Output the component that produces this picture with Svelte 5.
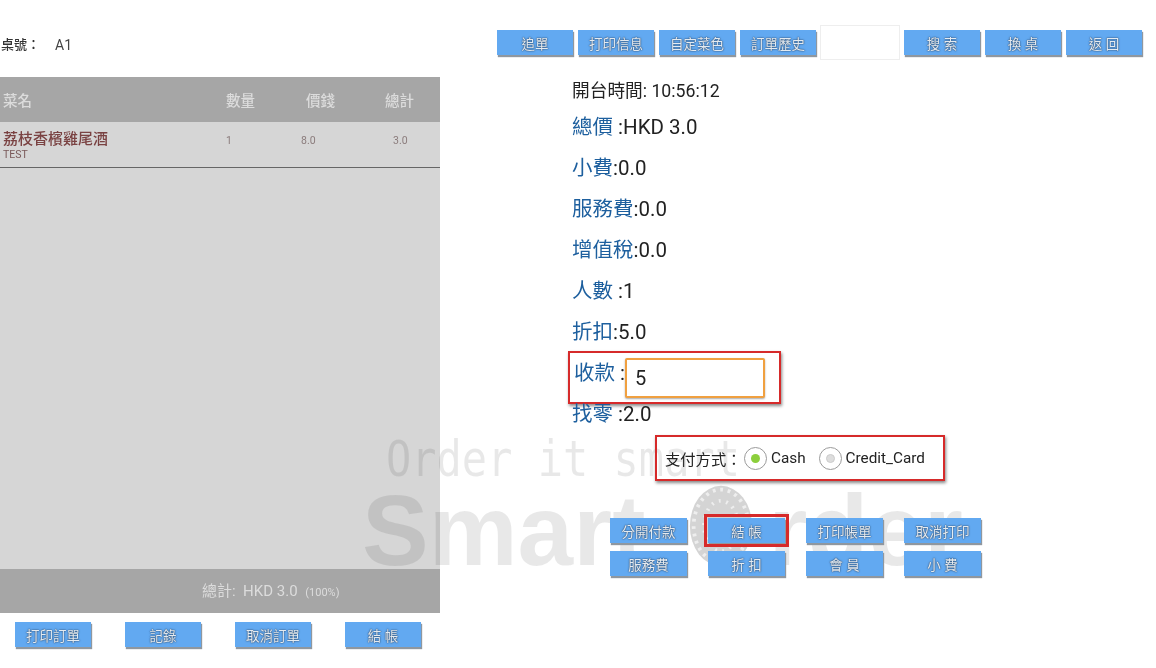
<script>
  const toolbarA = ['追單', '打印信息', '自定菜色', '訂單歷史'];
  const toolbarB = ['搜 索', '換 桌', '返 回'];
  const rows = [['小費', ':0.0'], ['服務費', ':0.0'], ['增值稅', ':0.0'], ['人數', ' :1'], ['折扣', ':5.0']];
  const actions = ['分開付款', '結 帳', '打印帳單', '取消打印', '服務費', '折 扣', '會 員', '小 費'];
  const footerBtns = ['打印訂單', '記錄', '取消訂單', '結 帳'];
</script>

<div class="screen">
  <section class="left">
    <div class="table-no"><span>桌號：</span><span class="a1">A1</span></div>
    <div class="panel">
      <div class="head"><span>菜名</span><span>數量</span><span>價錢</span><span>總計</span></div>
      <div class="item">
        <div class="dish"><div class="dish-name">荔枝香檳雞尾酒</div><div class="dish-sub">TEST</div></div>
        <span>1</span><span>8.0</span><span>3.0</span>
      </div>
      <div class="spacer"></div>
      <div class="total">總計:&nbsp; HKD 3.0 <small>(100%)</small></div>
    </div>
    <div class="left-btns">
      {#each footerBtns as b}<button class="btn">{b}</button>{/each}
    </div>
  </section>

  <div class="watermark" aria-hidden="true">
    <div class="wm-top">Order it smart</div>
    <div class="wm-main">
      <span>Smart</span>
      <svg class="globe" viewBox="0 0 70 90" width="66" height="84" preserveAspectRatio="none">
        <ellipse cx="35" cy="45" rx="33" ry="43" fill="#d4d4d4" />
        <ellipse cx="35" cy="45" rx="29" ry="39" fill="none" stroke="#eee" stroke-width="4" stroke-dasharray="3 5" />
        <ellipse cx="35" cy="45" rx="18" ry="27" fill="none" stroke="#eee" stroke-width="4" stroke-dasharray="2 6" />
      </svg>
      <span>rder</span>
    </div>
  </div>

  <section class="right">
    <div class="toolbar">
      {#each toolbarA as b}<button class="btn wide">{b}</button>{/each}
      <input class="search" aria-label="search" />
      {#each toolbarB as b}<button class="btn wide">{b}</button>{/each}
    </div>

    <div class="info">
      <div class="opened">開台時間: 10:56:12</div>
      <div class="row first"><b>總價</b> :HKD 3.0</div>
      {#each rows as [k, v]}<div class="row"><b>{k}</b>{v}</div>{/each}
      <div class="row boxed"><b>收款</b> :<input class="pay" value="5" aria-label="pay" /></div>
      <div class="row change"><b>找零</b> :2.0</div>

      <div class="payment">
        <span class="pm-label">支付方式：</span>
        <span class="radio on"></span><span class="pm-opt">Cash</span>
        <span class="radio off"></span><span class="pm-opt">Credit_Card</span>
      </div>

      <div class="actions">
        {#each actions as a, i}<button class="btn" class:marked={i === 1}>{a}</button>{/each}
      </div>
    </div>
  </section>
</div>

<style>
  :global(body) { margin: 0; background: #fff; }
  .screen {
    position: relative;
    width: 1156px;
    height: 668px;
    overflow: hidden;
    display: flex;
    font-family: "Roboto", "Noto Sans CJK TC", sans-serif;
    filter: blur(0.6px);
  }
  .left { width: 440px; flex: none; }
  .table-no {
    height: 77px;
    box-sizing: border-box;
    padding: 36px 0 0 1px;
    font-size: 13px;
    line-height: 18px;
    color: #333;
    display: flex;
    gap: 15px;
  }
  .table-no span:first-child { font-weight: 500; }
  .a1 { color: #444; font-size: 14px; }
  .panel {
    height: 536px;
    background: #d6d6d6;
    display: flex;
    flex-direction: column;
  }
  .head {
    height: 45px;
    flex: none;
    background: #a6a6a6;
    color: #dcdcdc;
    font-size: 14.5px;
    display: grid;
    grid-template-columns: 226px 80px 79px 1fr;
    align-items: center;
    font-weight: 500;
  }
  .head span:first-child { padding-left: 3px; }
  .item {
    height: 46px;
    flex: none;
    box-sizing: border-box;
    border-bottom: 1.5px solid #666;
    display: grid;
    grid-template-columns: 226px 75px 92px 1fr;
    align-items: start;
    color: #8b7c7c;
    font-size: 10.5px;
    padding-top: 12px;
  }
  .dish { padding-left: 3px; margin-top: -3px; }
  .dish-name { color: #7a4242; font-size: 15px; line-height: 17px; font-weight: 500; }
  .dish-sub { font-size: 10.5px; line-height: 13px; color: #7a5a5a; }
  .spacer { flex: 1; }
  .total {
    height: 44px;
    flex: none;
    background: #a6a6a6;
    color: #dcdcdc;
    font-size: 15px;
    line-height: 44px;
    padding-left: 202px;
  }
  .total small { font-size: 11px; margin-left: 4px; }
  .left-btns {
    display: grid;
    grid-template-columns: repeat(4, 76px);
    column-gap: 34px;
    padding: 9px 0 0 15px;
  }
  .btn {
    height: 25px;
    padding: 0;
    border: 0;
    border-radius: 0;
    background: #62a9f1;
    color: #e4ebf2;
    font-family: inherit;
    font-size: 13.5px;
    text-shadow: 0 0 2px #2c4460, 0 0 1px #2c4460;
    box-shadow: 1px 2px 1px #8f979f;
  }
  .watermark {
    position: absolute;
    left: 362px;
    top: 428px;
    color: rgba(0, 0, 0, 0.09);
  }
  .wm-top {
    margin-left: 24px;
    height: 52px;
    font-family: "DejaVu Sans Mono", monospace;
    font-size: 42px;
    line-height: 52px;
    white-space: nowrap;
    transform: scaleY(1.2);
    transform-origin: top;
  }
  .wm-main {
    display: flex;
    align-items: center;
    margin-top: 5px;
    font-family: "Liberation Sans", sans-serif;
    font-weight: 700;
    font-size: 100px;
    line-height: 90px;
    white-space: nowrap;
  }
  .globe { flex: none; margin: -8px 14px 0 43px; }
  .right {
    position: relative;
    z-index: 1;
    flex: 1;
    min-width: 0;
  }
  .toolbar {
    display: flex;
    align-items: center;
    gap: 5px;
    height: 35px;
    margin: 25px 0 0 57px;
  }
  .wide { width: 76px; flex: none; }
  .search {
    width: 80px;
    height: 35px;
    box-sizing: border-box;
    border: 1px solid #eee;
    background: #fff;
    padding: 0;
    margin: 0 -1px;
  }
  .info { padding-left: 132px; font-size: 20.5px; color: #222; }
  .opened { margin-top: 21px; font-size: 17.7px; line-height: 20px; color: #222; }
  .row { height: 41px; line-height: 41px; white-space: pre; }
  .row.first { margin-top: 6px; }
  .row b { font-weight: 400; color: #1d5f9e; }
  .row.boxed {
    width: 213px;
    height: 53px;
    box-sizing: border-box;
    margin: -2px 0 0 -4px;
    padding-left: 4px;
    border: 2px solid #d62a2a;
    box-shadow: 1px 2px 3px #888;
    display: flex;
    align-items: flex-start;
    line-height: 40px;
  }
  .pay {
    width: 140px;
    height: 40px;
    box-sizing: border-box;
    margin: 5px 0 0 0;
    padding: 0 0 0 8px;
    border: 2px solid #f0a040;
    border-radius: 2px;
    font: inherit;
    font-size: 20px;
    color: #222;
    box-shadow: 0 1px 2px #aaa;
    outline: none;
  }
  .row.change { height: 21px; line-height: 21px; }
  .payment {
    width: 290px;
    height: 46px;
    box-sizing: border-box;
    margin: 10px 0 0 83px;
    padding-left: 8px;
    border: 2px solid #d62a2a;
    box-shadow: 1px 2px 3px #888;
    display: flex;
    align-items: center;
    font-size: 15.3px;
  }
  .pm-label { width: 79px; flex: none; }
  .radio {
    width: 23px;
    height: 23px;
    flex: none;
    box-sizing: border-box;
    border: 1.5px solid #9a9a9a;
    border-radius: 50%;
    display: grid;
    place-items: center;
    margin-right: 4px;
    background: #fff;
  }
  .radio::after {
    content: "";
    width: 9px;
    height: 9px;
    border-radius: 50%;
  }
  .radio.on::after { background: #8ccf3c; }
  .radio.off::after { background: #ddd; border: 1px solid #ccc; box-sizing: border-box; }
  .pm-opt { margin-right: 13px; }
  .actions {
    display: grid;
    grid-template-columns: repeat(4, 77px);
    column-gap: 21px;
    row-gap: 8px;
    margin: 37px 0 0 38px;
  }
  .btn.marked { outline: 3px solid #d62a2a; outline-offset: 1px; }
</style>
